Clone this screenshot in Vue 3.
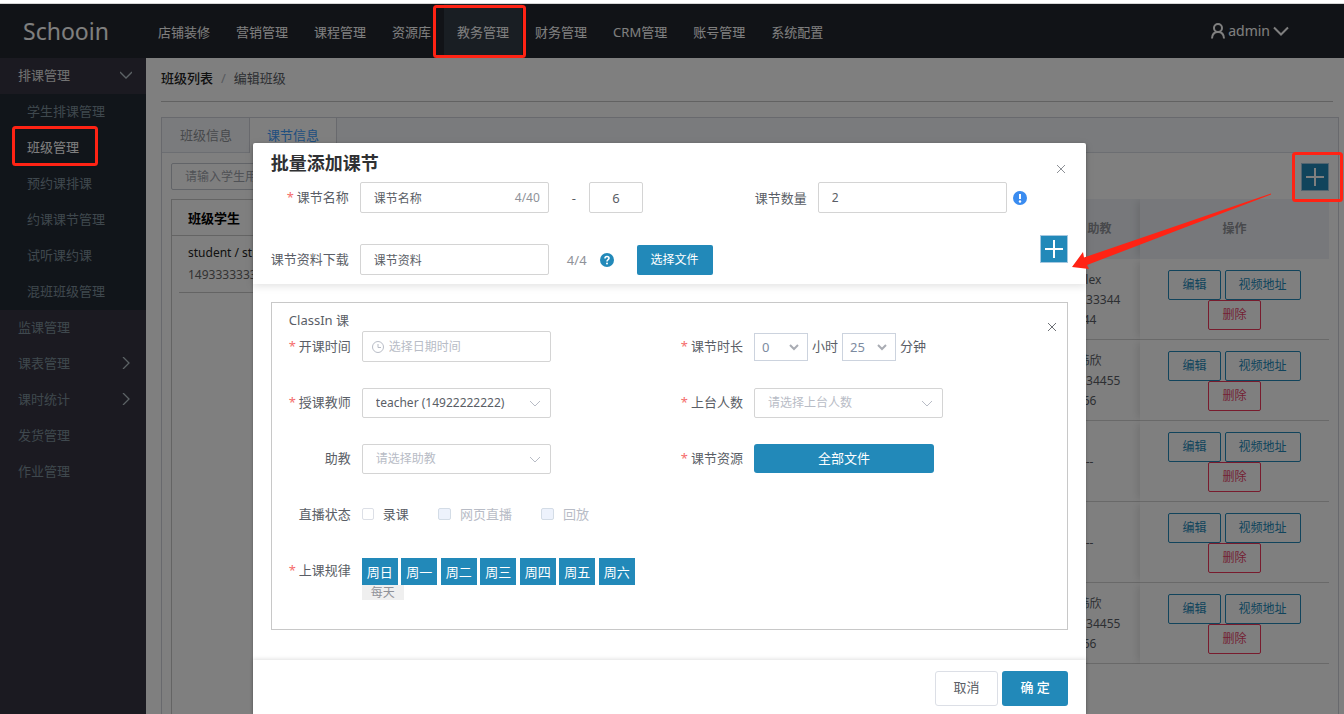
<script setup>
import { ref } from 'vue'

const nav = ['店铺装修', '营销管理', '课程管理', '资源库', '教务管理', '财务管理', 'CRM管理', '账号管理', '系统配置']
const subMenu = ['学生排课管理', '班级管理', '预约课排课', '约课课节管理', '试听课约课', '混班班级管理']
const menu = [
  { name: '监课管理' },
  { name: '课表管理', more: true },
  { name: '课时统计', more: true },
  { name: '发货管理' },
  { name: '作业管理' }
]
const rows = [
  ['Alex', '149333344', '44'],
  ['韩欣', '149334455', '66'],
  ['--'],
  ['--'],
  ['韩欣', '149334455', '66']
]
const days = ['周日', '周一', '周二', '周三', '周四', '周五', '周六']

const lessonName = ref('课节名称')
const lessonIndex = ref('6')
const lessonCount = ref('2')
const material = ref('课节资料')
const hours = ref('0')
const minutes = ref('25')
</script>

<template>
  <div class="page">
    <div class="strip"></div>
    <div class="app">
      <header class="topbar">
        <div class="logo">Schooin</div>
        <nav class="nav">
          <a v-for="n in nav" :key="n" href="#" :class="{ active: n === '教务管理' }">{{ n }}</a>
        </nav>
        <button class="user" type="button">
          <svg width="14" height="16" viewBox="0 0 14 16"><circle cx="7" cy="5" r="4" /><path d="M1 15.500C1.200 11 4 9 7 9s5.800 2 6 6.500" /></svg>
          <span>admin</span>
          <svg width="16" height="16" viewBox="0 0 16 16"><path d="M1 4.500l7 7 7-7" /></svg>
        </button>
      </header>

      <div class="body">
        <aside class="side">
          <a href="#" class="item open">排课管理
            <svg width="12" height="12" viewBox="0 0 12 12"><path d="M0 3l6 6 6-6" /></svg>
          </a>
          <div class="sub">
            <a v-for="s in subMenu" :key="s" href="#" :class="{ on: s === '班级管理' }">{{ s }}</a>
          </div>
          <a v-for="m in menu" :key="m.name" href="#" class="item">{{ m.name }}
            <svg v-if="m.more" width="12" height="12" viewBox="0 0 12 12"><path d="M3 0l6 6-6 6" /></svg>
          </a>
        </aside>

        <main class="main">
          <div class="crumb"><a href="#">班级列表</a><i>/</i><span>编辑班级</span></div>
          <section class="tabs">
            <div class="tabbar">
              <button type="button">班级信息</button>
              <button type="button" class="cur">课节信息</button>
            </div>
            <div class="pane">
              <div class="students">
                <input class="search" type="text" placeholder="请输入学生用户名" aria-label="学生用户名" />
                <div class="stubox">
                  <h3>班级学生</h3>
                  <div class="stu"><p>student / student</p><p class="tel">14933333333</p></div>
                </div>
              </div>
              <div class="lessons">
                <button class="plus" type="button" aria-label="添加课节"><svg width="18" height="18" viewBox="0 0 18 18"><path d="M9 0v18M0 9h18" /></svg></button>
                <table>
                  <thead><tr><th></th><th class="ta">助教</th><th class="fix">操作</th></tr></thead>
                  <tbody>
                    <tr v-for="(r, i) in rows" :key="i">
                      <td></td>
                      <td><div v-for="t in r" :key="t">{{ t }}</div></td>
                      <td class="fix">
                        <div class="ops">
                          <button type="button">编辑</button><button type="button">视频地址</button>
                          <button type="button" class="del">删除</button>
                        </div>
                      </td>
                    </tr>
                  </tbody>
                </table>
              </div>
            </div>
          </section>
        </main>
      </div>

      <div class="mask">
        <form class="modal" role="dialog" aria-labelledby="dlg" @submit.prevent>
          <div class="head">
            <h2 id="dlg">批量添加课节</h2>
            <button class="close" type="button" aria-label="关闭"><svg width="10" height="10" viewBox="0 0 10 10"><path d="M1 1l8 8M9 1l-8 8" /></svg></button>
            <div class="line">
              <label class="lab req" for="name">课节名称</label>
              <div class="field"><input id="name" v-model="lessonName" type="text" /><span class="count">4/40</span></div>
              <span class="dash">-</span>
              <input v-model="lessonIndex" class="short" type="text" aria-label="起始序号" />
              <label class="lab second" for="num">课节数量</label>
              <div class="field"><input id="num" v-model="lessonCount" type="text" /></div>
              <svg class="info" width="14" height="14" viewBox="0 0 14 14"><circle cx="7" cy="7" r="7" fill="#3a8cf0" /><path d="M7 3v5" stroke="#fff" stroke-width="2" /><circle cx="7" cy="10.500" r="1.200" fill="#fff" /></svg>
            </div>
            <div class="line">
              <label class="lab" for="mat">课节资料下载</label>
              <div class="field"><input id="mat" v-model="material" type="text" /></div>
              <span class="num">4/4</span>
              <svg class="help" width="14" height="14" viewBox="0 0 14 14"><circle cx="7" cy="7" r="7" fill="#2289b9" /><path d="M5 5.500C5 2.900 9 2.900 9 5.300 9 6.600 7 6.700 7 8.400" fill="none" stroke="#fff" stroke-width="1.600" /><circle cx="7" cy="10.500" r="1" fill="#fff" /></svg>
              <button class="primary pick" type="button">选择文件</button>
              <button class="plus" type="button" aria-label="添加"><svg width="18" height="18" viewBox="0 0 18 18"><path d="M9 0v18M0 9h18" /></svg></button>
            </div>
          </div>

          <div class="content">
            <div class="card">
              <button class="close" type="button" aria-label="移除"><svg width="10" height="10" viewBox="0 0 10 10"><path d="M1 1l8 8M9 1l-8 8" /></svg></button>
              <div class="kind">ClassIn 课</div>
              <div class="grid">
                <div class="row">
                  <label class="lab req" for="start">开课时间</label>
                  <div class="field date">
                    <svg width="12" height="12" viewBox="0 0 12 12"><circle cx="6" cy="6" r="5.500" /><path d="M6 3v3.500h3" /></svg>
                    <input id="start" type="text" placeholder="选择日期时间" />
                  </div>
                </div>
                <div class="row">
                  <label class="lab req" for="hour">课节时长</label>
                  <div class="duration">
                    <div class="mini"><select id="hour" v-model="hours"><option>0</option><option>1</option></select><svg width="12" height="12" viewBox="0 0 12 12"><path d="M2 4l4 4 4-4" /></svg></div>
                    <span>小时</span>
                    <div class="mini"><select v-model="minutes" aria-label="分钟"><option>25</option><option>30</option></select><svg width="12" height="12" viewBox="0 0 12 12"><path d="M2 4l4 4 4-4" /></svg></div>
                    <span>分钟</span>
                  </div>
                </div>
                <div class="row">
                  <label class="lab req" for="teacher">授课教师</label>
                  <div class="field sel"><select id="teacher"><option>teacher (14922222222)</option></select><svg width="12" height="12" viewBox="0 0 12 12"><path d="M1 4l5 5 5-5" /></svg></div>
                </div>
                <div class="row">
                  <label class="lab req" for="stage">上台人数</label>
                  <div class="field sel"><select id="stage" class="empty"><option>请选择上台人数</option></select><svg width="12" height="12" viewBox="0 0 12 12"><path d="M1 4l5 5 5-5" /></svg></div>
                </div>
                <div class="row">
                  <label class="lab" for="assist">助教</label>
                  <div class="field sel"><select id="assist" class="empty"><option>请选择助教</option></select><svg width="12" height="12" viewBox="0 0 12 12"><path d="M1 4l5 5 5-5" /></svg></div>
                </div>
                <div class="row">
                  <label class="lab req" for="res">课节资源</label>
                  <button id="res" class="primary all" type="button">全部文件</button>
                </div>
                <div class="row wide">
                  <span class="lab">直播状态</span>
                  <div class="checks">
                    <label><input type="checkbox" />录课</label>
                    <label class="off"><input type="checkbox" disabled />网页直播</label>
                    <label class="off"><input type="checkbox" disabled />回放</label>
                  </div>
                </div>
                <div class="row wide rule">
                  <span class="lab req">上课规律</span>
                  <div class="week">
                    <div class="days"><button v-for="d in days" :key="d" type="button">{{ d }}</button></div>
                    <button class="every" type="button">每天</button>
                  </div>
                </div>
              </div>
            </div>
          </div>

          <div class="foot">
            <button class="cancel" type="button">取消</button>
            <button class="primary ok" type="submit">确 定</button>
          </div>
        </form>
      </div>
    </div>

    <svg class="marks" width="1344" height="714" viewBox="0 0 1344 714" aria-hidden="true">
      <rect x="434.500" y="6.500" width="90" height="50" rx="2" />
      <rect x="13.500" y="127.500" width="83" height="37" rx="2" />
      <rect x="1293.500" y="153.500" width="48" height="47" rx="2" />
      <path d="M1271 193.500v1L1087 265l2 4-17-2 11-15 1 5.500z" />
    </svg>
  </div>
</template>

<style>
body { margin: 0; overflow: hidden; }
</style>

<style scoped>
* { box-sizing: border-box; }
.page {
  position: relative; display: flex; flex-direction: column; height: 100vh; overflow: hidden;
  font: 13px/20px "Noto Sans", "Noto Sans CJK SC", sans-serif; color: #5a5e66; background: #fff;
}
a { color: inherit; text-decoration: none; }
h2, h3, p { margin: 0; }
button, input, select { font: inherit; color: inherit; margin: 0; padding: 0; }
button { cursor: pointer; border: 0; background: none; }
svg { flex: none; }
.strip { height: 4px; flex: none; border-bottom: 1px solid #d6d6d6; }
.app { position: relative; flex: 1; min-height: 0; display: flex; flex-direction: column; }

.topbar { display: flex; height: 54px; flex: none; background: #23262e; color: #fff; }
.logo { width: 145px; padding-left: 23px; font-size: 23px; line-height: 54px; }
.nav { display: flex; flex: 1; }
.nav a { padding: 3px 13px 0; line-height: 50px; white-space: nowrap; }
.nav .active { background: #333d47; }
.user { display: flex; align-items: center; gap: 3px; margin-right: 55px; font-size: 14px; }
.user svg { fill: none; stroke: #fff; stroke-width: 2; }

.body { flex: 1; display: flex; min-height: 0; }
.side { width: 146px; flex: none; background: #363542; color: #7f919c; }
.side a { display: flex; align-items: center; height: 36px; padding-bottom: 2px; }
.side .item { justify-content: space-between; padding: 0 14px 2px 18px; }
.item svg { fill: none; stroke: #b9c4cb; stroke-width: 1.3; }
.side .open { color: #e4e4e4; }
.sub { background: #232a35; }
.sub a { padding-left: 27px; }
.sub .on { color: #fff; }

.main { flex: 1; min-width: 0; display: flex; flex-direction: column; padding: 0 5px 0 15px; }
.crumb { height: 44px; line-height: 41px; flex: none; margin: 0 6px 15px 0; border-bottom: 1px solid #c4c4c4; }
.crumb a { color: #222; font-weight: 500; }
.crumb i { margin: 0 8px; font-style: normal; color: #b0b4bc; }
.tabs { flex: 1; display: flex; flex-direction: column; min-height: 0; border: 1px solid #d0d3da; border-bottom: 0; }
.tabbar { display: flex; height: 35px; flex: none; background: #f5f7fa; border-bottom: 1px solid #d8dce5; }
.tabbar button { height: 35px; padding: 0 17px 2px; color: #909399; border-right: 1px solid #d0d3da; }
.tabbar button:first-child { padding: 0 17px 2px 18px; }
.tabbar .cur { background: #fff; color: #409eff; }
.pane { flex: 1; display: flex; gap: 20px; min-height: 0; padding: 10px 9px 0; }
.students { width: 190px; display: flex; flex-direction: column; gap: 9px; }
.search { width: 100%; height: 27px; padding: 0 13px; font-size: 12px; background: #fff; border: 1px solid #c4c8d0; border-radius: 2px; }
.search::placeholder { color: #a0a4ac; }
.stubox { flex: 1; border: 1px solid #c8c8c8; border-bottom: 0; }
.stubox h3 { height: 36px; padding-left: 16px; font-size: 13px; font-weight: 700; line-height: 36px; color: #000; border-bottom: 1px solid #c8c8c8; }
.stu { margin: 0 7px; padding: 6px 9px 6px; font-size: 12px; line-height: 22px; color: #222; border-bottom: 1px solid #c8c8c8; }
.tel { color: #666; }
.lessons { flex: 1; display: flex; flex-direction: column; align-items: flex-end; }
.plus { display: flex; align-items: center; justify-content: center; width: 28px; height: 28px; background: #2289b9; border: 1px solid #a5c8e0; }
.plus svg { fill: none; stroke: #fff; stroke-width: 2; }
table { width: 100%; margin-top: 8px; table-layout: fixed; border-collapse: separate; border-spacing: 0; font-size: 12px; text-align: center; }
th { height: 60px; padding: 0; background: #eef1f6; font-weight: 700; color: #909399; }
th:nth-child(2) { width: 101px; }
th.fix { width: 189px; }
th.ta { padding-left: 20px; }
td { height: 81px; padding: 2px 0 0; border-bottom: 1px solid #d2d2d2; }
.fix { box-shadow: -4px 0 8px -2px rgba(0, 0, 0, .12); clip-path: inset(0 0 0 -10px); }
.ops { display: flex; flex-wrap: wrap; justify-content: center; column-gap: 4px; padding: 0 20px; }
.ops button { height: 30px; padding: 0 13px; border: 1px solid #2289b9; border-radius: 2px; color: #2289b9; }
.ops .del { border-color: #f0365a; color: #e8446a; }

.mask { position: absolute; inset: 0; display: flex; justify-content: center; padding: 139px 5px 0 0; background: rgba(0, 0, 0, .5); }
.modal { position: relative; width: 62vw; display: flex; flex-direction: column; background: #fff; border-radius: 2px 2px 0 0; box-shadow: 0 1px 3px rgba(0, 0, 0, .3); }
.head { position: relative; padding: 8px 18px 9px; box-shadow: 0 2px 8px rgba(0, 0, 0, .12); }
.head h2 { font-size: 18px; line-height: 24px; color: #303133; margin-bottom: 7px; }
.close { position: absolute; right: 20px; top: 21px; display: flex; padding: 0; }
.close svg { fill: none; stroke: #8d9096; stroke-width: 1; }
.line { display: flex; align-items: center; height: 31px; }
.line + .line { margin-top: 31px; }
.lab { flex: none; width: 80px; margin-right: 10px; padding: 0 1px 2px 0; text-align: right; white-space: nowrap; }
.head .lab { width: 79px; }
.req::before { content: "*"; margin-right: 3px; color: #f56c6c; }
.field { position: relative; width: 189px; height: 31px; display: flex; align-items: center; border: 1px solid #d4d4d4; border-radius: 2px; font-size: 12px; }
.field input, .field select { width: 100%; height: 100%; padding: 0 13px; border: 0; background: none; outline: 0; appearance: none; }
.count { position: absolute; right: 8px; color: #8f9299; }
.dash { width: 40px; text-align: center; margin: 0 0 0 5px; }
.short { width: 54px; height: 31px; margin: 0 35px 0 -5px; text-align: center; border: 1px solid #d4d4d4; border-radius: 2px; }
.dash { width: 50px; margin: 0 -5px 0 0; }
.head .second { width: 130px; padding-bottom: 0; }
.info { margin-left: 6px; }
.num { margin: 0 13px 0 18px; color: #8f9299; }
.primary { background: #2289b9; color: #fff; border-radius: 2px; }
.pick { height: 30px; padding: 0 14px; margin-left: 23px; font-size: 12px; }
.line .plus { margin: -22px 0 0 auto; }

.content { flex: 1; padding: 18px; }
.card { position: relative; padding: 8px 11px 43px 0; border: 1px solid #c8c8c8; }
.card .close { right: 10px; top: 19px; }
.card .close svg { stroke: #6d7076; }
.kind { padding-left: 17px; line-height: 18px; margin-bottom: 2px; }
.grid { display: grid; grid-template-columns: 1fr 1fr; grid-auto-rows: 31px; row-gap: 25px; }
.row { display: flex; align-items: center; }
.wide { grid-column: 1 / 3; }
.date svg { position: absolute; left: 9px; fill: none; stroke: #b8bcc6; stroke-width: 1; }
.field.date input { padding-left: 26px; }
.field.date input::placeholder { color: #b8bcc6; opacity: 1; }
.sel { height: 30px; }
.field .empty { color: #b8bcc6; }
.sel svg { position: absolute; right: 9px; fill: none; stroke: #b8bcc6; pointer-events: none; }
.duration { display: flex; align-items: center; gap: 4px; }
.duration > span { padding-bottom: 2px; }
.mini { position: relative; display: flex; align-items: center; width: 54px; height: 28px; border: 1px solid #ccd3de; }
.mini select { width: 100%; height: 100%; padding-left: 7px; border: 0; background: none; appearance: none; color: #7d8ba0; }
.mini svg { position: absolute; right: 7px; fill: none; stroke: #a9acb3; stroke-width: 2; pointer-events: none; }
.all { width: 180px; height: 29px; padding-bottom: 2px; border-radius: 3px; }
.checks { display: flex; gap: 29px; padding-bottom: 1px; }
.checks label { display: flex; align-items: center; gap: 9px; }
.checks input { appearance: none; width: 12px; height: 12px; border: 1px solid #dcdfe6; border-radius: 2px; background: #fff; }
.checks .off { color: #b8bcc6; }
.checks .off input { background: #edf2fc; border-color: #d3dce6; width: 13px; }
.rule { align-items: flex-start; line-height: 31px; }
.week { display: flex; flex-direction: column; align-items: flex-start; width: 273px; padding-top: 3px; }
.days { display: flex; justify-content: space-between; width: 100%; }
.days button { width: 36px; height: 27px; padding-top: 2px; line-height: 25px; background: #2289b9; color: #fff; }
.every { width: 42px; height: 15px; font-size: 12px; line-height: 12px; background: #efefef; color: #8f9299; }
.foot { display: flex; justify-content: flex-end; gap: 4px; height: 54px; padding: 11px 18px 0; box-shadow: 0 -1px 4px rgba(0, 0, 0, .12); }
.foot button { height: 35px; padding-bottom: 3px; border-radius: 3px; }
.cancel { width: 63px; border: 1px solid #dcdfe6; }
.ok { width: 66px; font-weight: 500; }

.marks { position: absolute; left: 0; top: 0; pointer-events: none; }
.marks rect { fill: none; stroke: #ff2314; stroke-width: 3; }
.marks path { fill: #ff2314; }
</style>
